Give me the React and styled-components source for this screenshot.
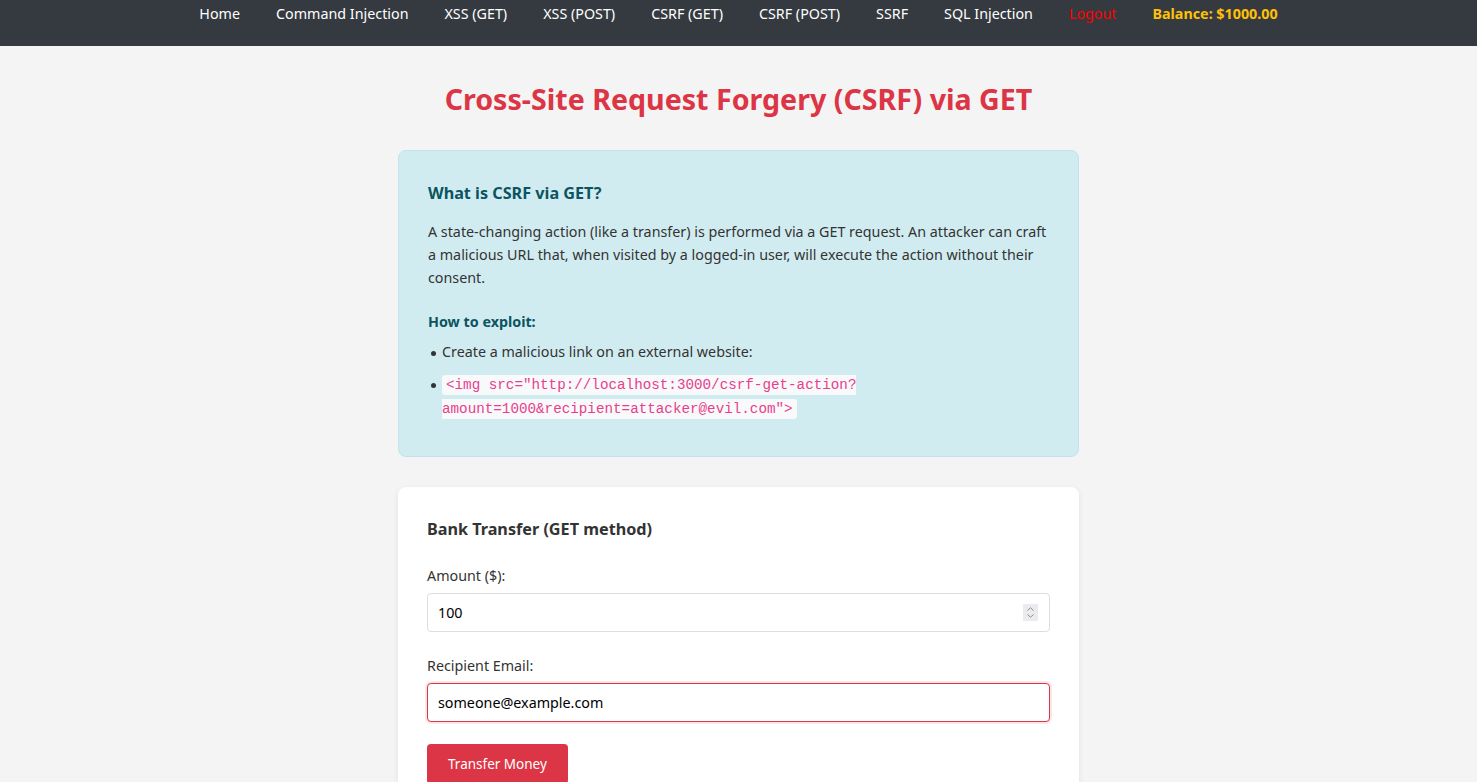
import React from "react";
import styled, { createGlobalStyle } from "styled-components";

const GlobalStyle = createGlobalStyle`
    * {
        box-sizing: border-box;
    }

    body {
        margin: 0;
        background-color: #f4f4f4;
        font-family: "Noto Sans", "Open Sans", sans-serif;
        color: #333;
    }
`;

const NavBar = styled.nav`
    height: 46px;
    padding-top: 3px;

    display: flex;
    justify-content: center;
    align-items: flex-start;
    gap: 36px;

    background-color: #343a40;
`;

const NavLink = styled.a`
    font-size: 14.3px;
    line-height: 21px;
    font-weight: ${(props) => (props.bold ? 700 : 400)};
    color: ${(props) => props.color || "#fff"};
    text-decoration: none;
    cursor: pointer;
`;

const Main = styled.main`
    max-width: 681px;
    margin: 0 auto;
    padding-top: 35px;
`;

const Title = styled.h1`
    margin: 0 0 33px;

    font-size: 28.6px;
    line-height: 36px;
    font-weight: 700;
    text-align: center;
    color: #dc3545;
`;

const InfoBox = styled.section`
    padding: 30px 29px 29px;

    background-color: #d1ecf1;
    border: 1px solid #bee5eb;
    border-radius: 8px;
`;

const InfoTitle = styled.h3`
    margin: 0 0 15px;

    font-size: 16.2px;
    line-height: 24px;
    font-weight: 700;
    color: #0c5460;
`;

const Text = styled.p`
    margin: 0 0 21px;

    font-size: 14.3px;
    line-height: 23px;
    color: #333;
`;

const SubTitle = styled.h4`
    margin: 0 0 7px;

    font-size: 14.3px;
    line-height: 23px;
    font-weight: 700;
    color: #0c5460;
`;

const List = styled.ul`
    margin: 0 0 7px;
    padding: 0;
    list-style: none;
`;

const Item = styled.li`
    margin-bottom: 8px;
    padding-left: 14px;

    font-size: 14.3px;
    line-height: 24px;
    color: #333;

    &::before {
        content: "";
        display: inline-block;
        width: 5px;
        height: 5px;
        margin-left: -11px;
        margin-right: 6px;
        vertical-align: middle;
        border-radius: 50%;
        background-color: #333;
    }

    &:last-child {
        margin-bottom: 0;
    }
`;

const Code = styled.code`
    padding: 2px 4px;

    font-family: "Liberation Mono", monospace;
    font-size: 14.25px;
    line-height: 18px;
    color: #e83e8c;

    background-color: #f8f9fa;
    border-radius: 3px;
`;

const Card = styled.section`
    margin-top: 30px;
    padding: 30px 29px;

    background-color: #fff;
    border-radius: 8px;
    box-shadow: 0 2px 6px rgba(0, 0, 0, 0.08);
`;

const CardTitle = styled.h3`
    margin: 0 0 23px;

    font-size: 16.2px;
    line-height: 24px;
    font-weight: 700;
    color: #333;
`;

const Field = styled.div`
    margin-bottom: 22px;
`;

const Label = styled.label`
    display: block;
    margin-bottom: 6px;

    font-size: 14.3px;
    line-height: 23px;
    color: #333;
`;

const InputWrap = styled.div`
    position: relative;
`;

const Input = styled.input`
    display: block;
    width: 100%;
    height: 39px;
    padding: 8px 10px;

    font-family: "Noto Sans", sans-serif;
    font-size: 14.3px;
    color: #000;

    background-color: #fff;
    border: 1px solid ${(props) => (props.focused ? "#dc3545" : "#ddd")};
    border-radius: 4px;
    box-shadow: ${(props) => (props.focused ? "0 0 0 2px rgba(220, 53, 69, 0.12)" : "none")};
    outline: none;

    &::-webkit-inner-spin-button,
    &::-webkit-outer-spin-button {
        -webkit-appearance: none;
        margin: 0;
    }
`;

const Spinner = styled.span`
    position: absolute;
    top: 11px;
    right: 12px;

    width: 15px;
    height: 17px;

    display: flex;
    flex-direction: column;
    align-items: center;
    justify-content: center;
    gap: 3px;

    background-color: #ebebef;
    pointer-events: none;
`;

const Button = styled.button`
    padding: 10px 21px;

    font-family: "Noto Sans", sans-serif;
    font-size: 13.5px;
    line-height: 20px;
    color: #fff;

    background-color: #dc3545;
    border: none;
    border-radius: 4px;
    cursor: pointer;
`;

const Chevron = ({ up }) => (
    <svg width="7" height="4" viewBox="0 0 7 4">
        <path
            d={up ? "M0.5 3.5 L3.5 0.8 L6.5 3.5" : "M0.5 0.5 L3.5 3.2 L6.5 0.5"}
            fill="none"
            stroke="#8a8a8a"
            strokeWidth="1"
        />
    </svg>
);

const links = [
    "Home",
    "Command Injection",
    "XSS (GET)",
    "XSS (POST)",
    "CSRF (GET)",
    "CSRF (POST)",
    "SSRF",
    "SQL Injection",
];

const App = () => {
    return (
        <>
            <GlobalStyle />

            {/* NAV */}
            <NavBar>
                {links.map((l) => (
                    <NavLink key={l}>{l}</NavLink>
                ))}
                <NavLink color="#ff0000">Logout</NavLink>
                <NavLink color="#ffc107" bold>Balance: $1000.00</NavLink>
            </NavBar>

            <Main>
                <Title>Cross-Site Request Forgery (CSRF) via GET</Title>

                {/* INFO */}
                <InfoBox>
                    <InfoTitle>What is CSRF via GET?</InfoTitle>
                    <Text>
                        A state-changing action (like a transfer) is performed via a GET request. An attacker can craft
                        a malicious URL that, when visited by a logged-in user, will execute the action without their
                        consent.
                    </Text>
                    <SubTitle>How to exploit:</SubTitle>
                    <List>
                        <Item>Create a malicious link on an external website:</Item>
                        <Item>
                            <Code>{'<img src="http://localhost:3000/csrf-get-action?amount=1000&recipient=attacker@evil.com">'}</Code>
                        </Item>
                    </List>
                </InfoBox>

                {/* FORM */}
                <Card>
                    <CardTitle>Bank Transfer (GET method)</CardTitle>
                    <Field>
                        <Label>Amount ($):</Label>
                        <InputWrap>
                            <Input type="number" defaultValue="100" />
                            <Spinner>
                                <Chevron up />
                                <Chevron />
                            </Spinner>
                        </InputWrap>
                    </Field>
                    <Field>
                        <Label>Recipient Email:</Label>
                        <Input type="email" defaultValue="someone@example.com" focused />
                    </Field>
                    <Button>Transfer Money</Button>
                </Card>
            </Main>
        </>
    );
};

export default App;
